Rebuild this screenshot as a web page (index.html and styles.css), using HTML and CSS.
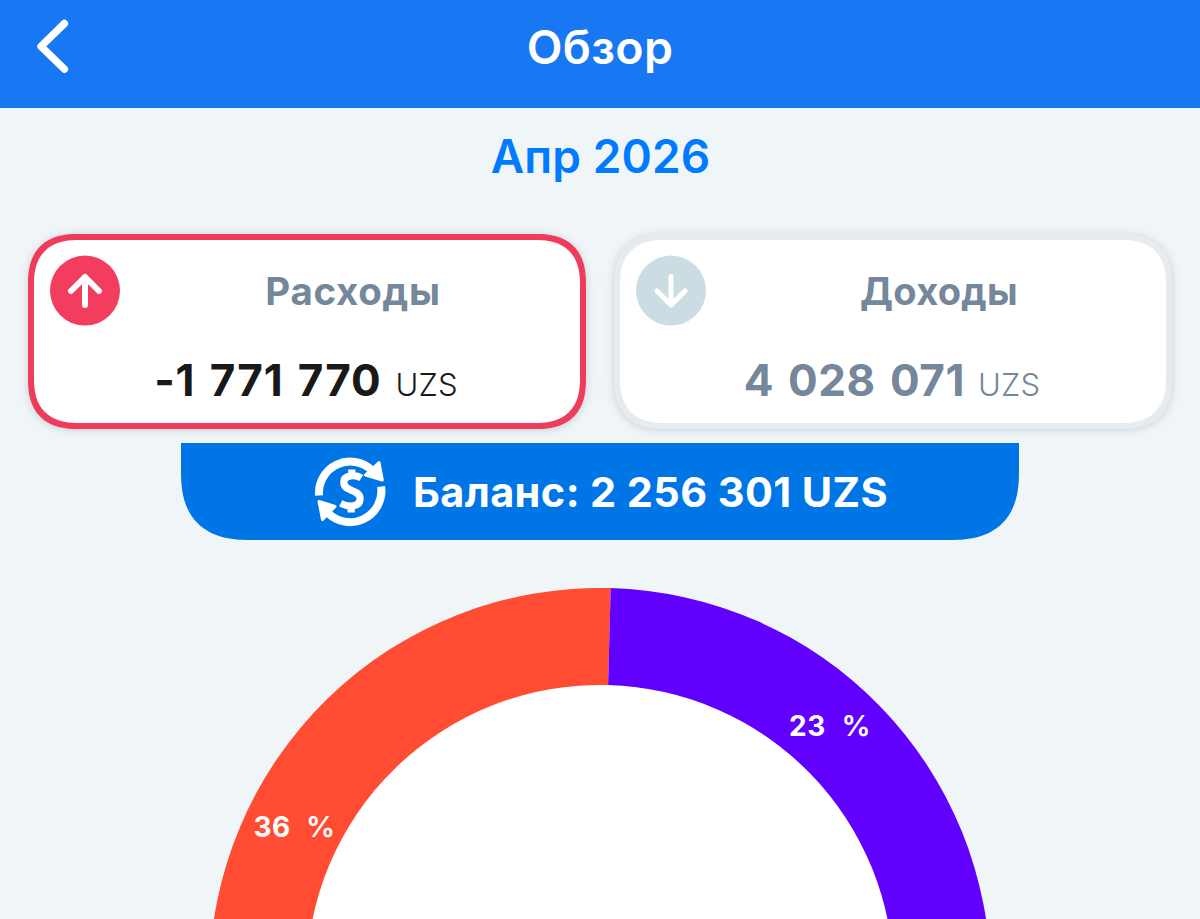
FILE: index.html
```html
<!DOCTYPE html>
<html lang="ru">
<head>
<meta charset="utf-8">
<title>Обзор</title>
<link rel="stylesheet" href="styles.css">
</head>
<body>
<header class="topbar">
  <svg class="back" width="40" height="60" viewBox="0 0 40 60"><path d="M34.4 9.5 11 32.3 34.4 55.2"/></svg>
  <h1 class="title"><span>Обзор</span></h1>
</header>
<main class="page">
  <div class="month"><span>Апр 2026</span></div>
  <section class="cards">
    <article class="card card-expense">
      <div class="card-head">
        <svg class="badge" width="70" height="70" viewBox="0 0 70 70"><circle cx="35" cy="34.6" r="35"/><path stroke-width="6" d="M35 49V21M21 35 35 21 49 35"/></svg>
        <h2 class="card-title"><span>Расходы</span></h2>
      </div>
      <p class="sum"><b class="num">-1 771 770</b><span class="cur">UZS</span></p>
    </article>
    <article class="card card-income">
      <div class="card-head">
        <svg class="badge" width="70" height="70" viewBox="0 0 70 70"><circle cx="35" cy="34.6" r="35"/><path stroke-width="5" d="M35 20.5V49M21 35 35 49 49 35"/></svg>
        <h2 class="card-title"><span>Доходы</span></h2>
      </div>
      <p class="sum"><b class="num">4 028 071</b><span class="cur">UZS</span></p>
    </article>
  </section>
  <div class="balance">
    <svg class="coin" width="74" height="74" viewBox="0 0 74 74">
      <path class="ring" d="M6.1 40.5A31.3 31.3 0 0 1 59 15.3M68.1 31.5A31.3 31.3 0 0 1 14.5 57.5"/>
      <path class="tip" d="M66 7.5 69.3 25 52.5 20ZM6 46.5 22 51.5 9.5 64.5Z"/>
      <path class="dollar" d="M48.3 23C43 19.5 30.8 19.3 30.8 27.6C30.8 37 47.1 34 47.1 43.8C47.1 52.5 35.5 52.3 27.7 48.4M38.8 14.5V21M38.2 50V57.5"/>
    </svg>
    <span class="balance-text">Баланс: 2 256 301 UZS</span>
  </div>
  <figure class="chart">
    <svg width="784" height="331" viewBox="208 588 784 331">
      <circle cx="600" cy="978.6" r="294.5" fill="#fff"/>
      <path fill="#ff4c33" d="M209.4 978.6A390.6 390.6 0 0 1 610.7 588.1L608.1 685.1A293.6 293.6 0 0 0 306.4 978.6Z"/>
      <path fill="#6200ff" d="M610.7 588.1A390.6 390.6 0 0 1 990.6 978.6H893.6A293.6 293.6 0 0 0 608.1 685.1Z"/>
      <text class="share" x="789" y="736">23</text><text class="share pct" x="841.5" y="736">%</text>
      <text class="share" x="253.5" y="836.5">36</text><text class="share pct" x="306" y="836.5">%</text>
    </svg>
  </figure>
</main>
</body>
</html>
```
FILE: styles.css
```css
* { box-sizing: border-box; margin: 0; padding: 0; }
body {
  width: 1200px;
  height: 919px;
  overflow: hidden;
  background: #f0f5f8;
  font-family: Inter, "Noto Sans", sans-serif;
}
svg { display: block; flex: none; overflow: visible; }
.topbar {
  display: grid;
  grid-template-columns: 40px 1fr 40px;
  height: 108px;
  padding: 14px 30px 0;
  background: #1877f2;
}
.back path { fill: none; stroke: #fff; stroke-width: 7.4; stroke-linecap: round; stroke-linejoin: round; }
.title { text-align: center; font-size: 46.5px; font-weight: 600; letter-spacing: .3px; line-height: 67px; color: #fff; }
.month {
  height: 126px;
  padding: 18px 0 0 1px;
  text-align: center;
  font-size: 46px;
  font-weight: 570;
  letter-spacing: .1px;
  line-height: 61px;
  color: #007aff;
}
.cards { display: flex; gap: 28px; padding: 0 28px; }
.card {
  flex: 1;
  height: 195px;
  padding: 16px 0 0 16px;
  background: #fff;
  border: 6px solid #f03c5c;
  border-radius: 50px;
  corner-shape: superellipse(1.3);
  box-shadow: 0 1px 8px rgba(60, 80, 95, .22);
}
.card-income { border-color: #e5ebef; }
.card-head { display: flex; margin-right: -6px; }
.badge circle { fill: #f23d5e; }
.badge path { fill: none; stroke: #fff; stroke-linecap: round; stroke-linejoin: round; }
.card-income .badge circle { fill: #ccdce3; }
.card-title { flex: 1; text-align: center; font-size: 38.5px; font-weight: 700; letter-spacing: .7px; line-height: 70px; color: #74879b; }
.card-income .card-title { font-size: 38px; letter-spacing: .3px; }
.sum {
  display: flex;
  align-items: baseline;
  justify-content: center;
  gap: 14px;
  margin: 28px 0 0 -18px;
  line-height: 52px;
  color: #191919;
}
.card-income .sum { gap: 13px; color: #74879b; }
.num { font-size: 44px; font-weight: 700; letter-spacing: .9px; word-spacing: 3px; }
.card-income .num { letter-spacing: .6px; word-spacing: 3px; }
.cur { font-size: 31px; font-weight: 320; letter-spacing: .2px; }
.balance {
  display: flex;
  align-items: center;
  gap: 26px;
  width: 838px;
  height: 97px;
  margin: 14px auto 0;
  padding-left: 132px;
  background: #0075e6;
  border-radius: 0 0 68px 68px;
  corner-shape: superellipse(1.3);
}
.ring { fill: none; stroke: #fff; stroke-width: 8; }
.tip { fill: #fff; stroke: #fff; stroke-width: 3; stroke-linejoin: round; }
.dollar { fill: none; stroke: #fff; stroke-width: 7.2; }
.balance-text { white-space: nowrap; font-size: 41.5px; font-weight: 650; letter-spacing: .38px; line-height: 60px; color: #fff; }
.chart { display: flex; justify-content: center; margin-top: 48px; }
.share { fill: #fff; font-size: 28px; font-weight: 650; letter-spacing: .5px; }
.pct { font-size: 29px; font-weight: 600; }
```
